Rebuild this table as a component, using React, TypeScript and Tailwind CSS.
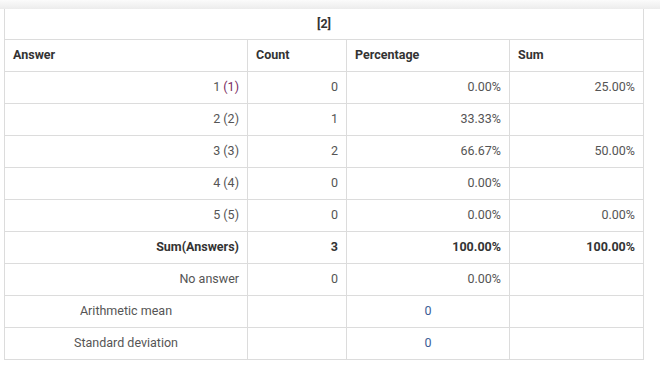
const rows = [
  { label: "1", code: "(1)", visited: true, count: "0", pct: "0.00%", sum: "25.00%" },
  { label: "2", code: "(2)", count: "1", pct: "33.33%", sum: "" },
  { label: "3", code: "(3)", count: "2", pct: "66.67%", sum: "50.00%" },
  { label: "4", code: "(4)", count: "0", pct: "0.00%", sum: "" },
  { label: "5", code: "(5)", count: "0", pct: "0.00%", sum: "0.00%" },
];

const td = "border border-[#dcdcdc] px-2 pt-px text-right";

export default function App() {
  return (
    <div
      className="w-[660px] h-[366px] bg-white overflow-hidden text-[12.5px] text-[#555]"
      style={{ fontFamily: "Roboto, 'Liberation Sans', sans-serif" }}
    >
      {/* top shadow strip */}
      <div className="h-[9px] bg-gradient-to-b from-[#fbfbfb] to-[#ececec]" />
      <div className="pl-[4px]">
        <table className="border-collapse table-fixed w-[639px]">
          <colgroup>
            <col className="w-[243px]" />
            <col className="w-[99px]" />
            <col className="w-[163px]" />
            <col className="w-[134px]" />
          </colgroup>
          <thead>
            <tr className="h-[30px]">
              <th
                colSpan={4}
                className="border-x border-b border-[#dcdcdc] pt-px text-center font-bold text-[#333]"
              >
                [2]
              </th>
            </tr>
            <tr className="h-[32px]">
              {["Answer", "Count", "Percentage", "Sum"].map((h) => (
                <th key={h} className="border border-[#dcdcdc] px-2 pt-px text-left font-bold text-[#333]">
                  {h}
                </th>
              ))}
            </tr>
          </thead>
          <tbody>
            {rows.map((r) => (
              <tr key={r.label} className="h-[32px]">
                <td className={td}>
                  {r.label}{" "}
                  <span className={r.visited ? "text-[#7a2c62]" : ""}>{r.code}</span>
                </td>
                <td className={td}>{r.count}</td>
                <td className={td}>{r.pct}</td>
                <td className={td}>{r.sum}</td>
              </tr>
            ))}
            <tr className="h-[32px] font-bold text-[#333]">
              <td className={td}>Sum(Answers)</td>
              <td className={td}>3</td>
              <td className={td}>100.00%</td>
              <td className={td}>100.00%</td>
            </tr>
            <tr className="h-[32px]">
              <td className={td}>No answer</td>
              <td className={td}>0</td>
              <td className={td}>0.00%</td>
              <td className={td}></td>
            </tr>
            {["Arithmetic mean", "Standard deviation"].map((l) => (
              <tr key={l} className="h-[32px]">
                <td className="border border-[#dcdcdc] px-2 pt-px text-center">{l}</td>
                <td className={td}></td>
                <td className="border border-[#dcdcdc] px-2 pt-px text-center text-[#3b5d96]">0</td>
                <td className={td}></td>
              </tr>
            ))}
          </tbody>
        </table>
      </div>
    </div>
  );
}
